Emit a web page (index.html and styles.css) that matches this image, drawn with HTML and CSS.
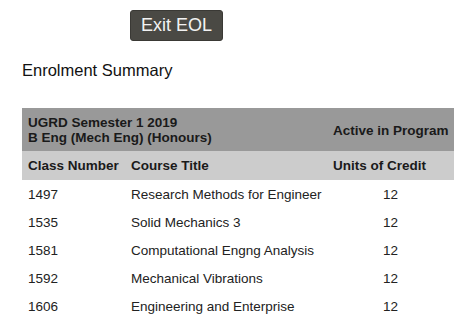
FILE: index.html
```html
<!DOCTYPE html>
<html>
<head>
<meta charset="utf-8">
<link rel="stylesheet" href="styles.css">
</head>
<body>
<div class="page">
  <div class="toolbar"><button class="exit-btn">Exit EOL</button></div>
  <h2 class="title">Enrolment Summary</h2>
  <table class="summary">
    <colgroup><col class="c1"><col class="c2"><col class="c3"></colgroup>
    <thead>
      <tr class="term-row">
        <th colspan="2">UGRD Semester 1 2019<br>B Eng (Mech Eng) (Honours)</th>
        <th>Active in Program</th>
      </tr>
      <tr class="col-row">
        <th>Class Number</th>
        <th>Course Title</th>
        <th>Units of Credit</th>
      </tr>
    </thead>
    <tbody>
      <tr><td>1497</td><td>Research Methods for Engineer</td><td class="num">12</td></tr>
      <tr><td>1535</td><td>Solid Mechanics 3</td><td class="num">12</td></tr>
      <tr><td>1581</td><td>Computational Engng Analysis</td><td class="num">12</td></tr>
      <tr><td>1592</td><td>Mechanical Vibrations</td><td class="num">12</td></tr>
      <tr><td>1606</td><td>Engineering and Enterprise</td><td class="num">12</td></tr>
    </tbody>
  </table>
</div>
</body>
</html>
```
FILE: styles.css
```css
html, body {
  margin: 0;
  padding: 0;
  background: #ffffff;
}
body {
  font-family: "Liberation Sans", Arial, sans-serif;
  color: #222;
}
.page {
  padding: 10px 11px 0 22px;
}
.toolbar {
  padding-left: 108px;
}
.exit-btn {
  font-family: "Liberation Sans", Arial, sans-serif;
  font-size: 18px;
  color: #f2f2f2;
  background: #4a4944;
  border: 1px solid #3a3935;
  border-radius: 3px;
  height: 31px;
  width: 93px;
  padding: 0;
  display: block;
}
.title {
  font-size: 16.5px;
  font-weight: normal;
  color: #111;
  margin: 18px 0 0 0;
  line-height: 22px;
}
.summary {
  margin-top: 27px;
  width: 432px;
  border-collapse: collapse;
  table-layout: fixed;
  font-size: 13.5px;
}
.c1 { width: 103px; }
.c2 { width: 202px; }
.c3 { width: 127px; }
.summary th {
  text-align: left;
  font-weight: bold;
  color: #1a1a1a;
  padding: 0 0 0 6px;
  white-space: nowrap;
}
.term-row th {
  background: #999999;
  height: 42px;
  line-height: 15px;
  padding-top: 1px;
}
.col-row th {
  background: #cccccc;
  height: 29px;
}
.summary td {
  height: 28px;
  padding: 0 0 0 6px;
  color: #222;
  white-space: nowrap;
}
.summary td.num {
  text-align: center;
  padding: 0;
}
```
